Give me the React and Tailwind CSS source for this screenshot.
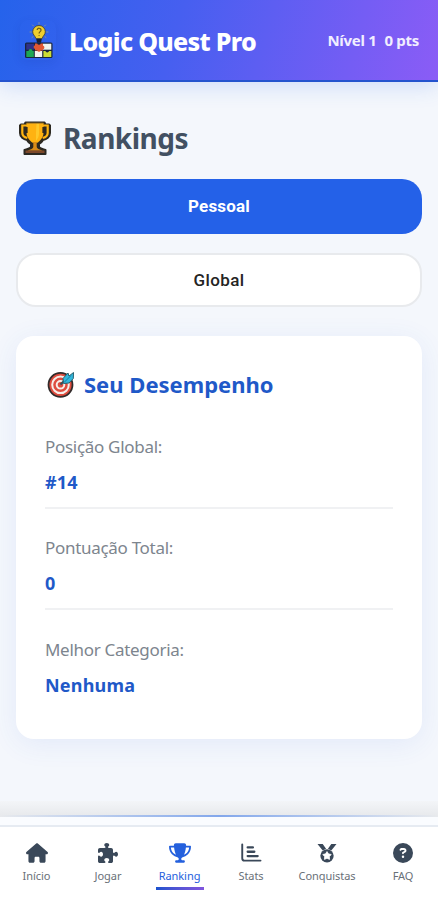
import { FaHouse, FaPuzzlePiece, FaTrophy, FaCircleQuestion } from 'react-icons/fa6';

const stats = [
  { label: 'Posição Global:', value: '#14' },
  { label: 'Pontuação Total:', value: '0' },
  { label: 'Melhor Categoria:', value: 'Nenhuma' },
];

const StatsIcon = ({ className }) => (
  <svg viewBox="0 0 22 21" className={className} fill="none" stroke="currentColor" strokeLinecap="round">
    <path d="M1.800 1.500V16c0 1.500.8 2.500 2.300 2.500H21" strokeWidth="2" />
    <path d="M7.500 4.700H13M7.500 9.200h7M7.500 13.700H18" strokeWidth="2.400" />
  </svg>
);

const MedalIcon = ({ className }) => (
  <svg viewBox="0 0 22 21" className={className} fill="currentColor">
    <path d="M1 1h5.500L10 6 6.500 8zM21 1h-5.500L12 6l3.500 2z" />
    <circle cx="11" cy="13.500" r="7" />
    <path d="m11 9 1.500 2.400 2.900.7-1.900 2.200.2 2.900-2.700-1.100-2.700 1.100.2-2.900-1.900-2.200 2.900-.7z" fill="#fff" stroke="#fff" strokeWidth="0.800" strokeLinejoin="round" />
  </svg>
);

const tabs = [
  { label: 'Início', icon: FaHouse, width: 'w-[73px]' },
  { label: 'Jogar', icon: FaPuzzlePiece, width: 'w-[70px]' },
  { label: 'Ranking', icon: FaTrophy, width: 'w-[73px]', active: true },
  { label: 'Stats', icon: StatsIcon, width: 'w-[70px]' },
  { label: 'Conquistas', icon: MedalIcon, width: 'w-[82px]' },
  { label: 'FAQ', icon: FaCircleQuestion, width: 'w-[70px]' },
];

const Logo = () => (
  <svg viewBox="0 0 36 40" className="h-10 w-9 shrink-0">
    <g stroke="#d8c84a" strokeWidth="0.7" strokeLinecap="round" opacity="0.7">
      <path d="M19 2.500V4M12.500 5l1 1M25.500 5l-1 1M10 12h1.300M26.700 12H28M12 17.500l1-.8M26 17.500l-1-.8" />
    </g>
    <path d="M19 5.500a6.300 6.300 0 0 0-6.300 6.200c0 3 2.300 4 3.300 7h6c1-3 3.300-4 3.300-7A6.300 6.300 0 0 0 19 5.500z" fill="#f0cf2e" stroke="#4a4730" strokeWidth="0.9" />
    <path d="M17.200 10c0-2.500 4-2.300 3.800.2-.1 1.500-1.900 1.400-1.900 3.200M19.100 15.200v.9" fill="none" stroke="#6d5a18" strokeWidth="1.200" />
    <path d="M16.200 18.800h5.600l-.8 4h-4z" fill="#172137" />
    <rect x="5" y="22.500" width="27.500" height="15.500" rx="1.500" fill="#17243d" />
    <path d="M6.300 23.700h8v6h-8z" fill="#303187" />
    <path d="M23 23.700h8.300v6H23z" fill="#eef3ed" />
    <path d="M6.300 31h2.200a2 2 0 0 1 4 0h1.300v6H6.300z" fill="#1da653" />
    <path d="M14.800 31h7.400v6h-7.400z" fill="#f3f4ee" />
    <path d="M23.400 31h2a1.900 1.900 0 0 0 3.700 0h2.200v6h-7.900z" fill="#cbdc35" />
    <path d="M15 23.500h2.200a1.900 1.900 0 0 0 3.600 0H23v2a2 2 0 0 1 0 3.800v1.200h-2.200a1.900 1.900 0 0 1-3.600 0H15v-1.500a2 2 0 0 1 0-3.800z" fill="#e25832" />
  </svg>
);

const TrophyIcon = () => (
  <svg viewBox="0 0 32 36" className="h-9 w-8 shrink-0">
    <path d="M6.500 2.500h19l1 2H30l1 1V13c0 4-3.500 6.500-7 7-1 2-2.500 3-4 4v2.500c0 1.500 3 2.500 6.500 3.500V34h-21v-4c3.500-1 6.500-2 6.500-3.500V24c-1.500-1-3-2-4-4-3.500-.5-7-3-7-7V5.500l1-1h3.500z" fill="#2c2922" stroke="#2c2922" strokeWidth="2" strokeLinejoin="round" />
    <path d="M8 5.500H3.300V13c0 2.500 2 4.300 5 5M24 5.500h4.700V13c0 2.500-2 4.300-5 5" fill="none" stroke="#ffb411" strokeWidth="2.200" />
    <path d="M7.500 3h17v9.500c0 5-3.500 8.500-6 10.200h-5c-2.500-1.700-6-5.200-6-10.200z" fill="#ffb211" />
    <path d="M14.300 22h3.400v5c0 1.500 2.500 2.500 6 3.700H8.300c3.500-1.200 6-2.200 6-3.700z" fill="#d98b18" />
    <path d="M17.500 3.500H20v10c0 3.500-1.500 5-3 7.500v-8z" fill="#ffc829" />
    <path d="M7.500 3.200h17" stroke="#a57a25" strokeWidth="1" />
    <path d="M7.500 7v6M24.500 7v6" stroke="#30291e" strokeWidth="2.200" />
    <path d="M6.500 30.500h19V33h-19z" fill="#7c482b" />
  </svg>
);

const TargetIcon = () => (
  <svg viewBox="0 0 30 30" className="h-[30px] w-[30px] shrink-0">
    <circle cx="15.500" cy="15.800" r="12" fill="#df4c3e" stroke="#312b2b" strokeWidth="1.800" />
    <circle cx="15.500" cy="15.800" r="8.300" fill="none" stroke="#f6efea" strokeWidth="2" />
    <circle cx="15.500" cy="15.800" r="3.800" fill="#dc4d3f" stroke="#f6efea" strokeWidth="2" />
    <path d="m15.500 15.500 7-7" stroke="#31515b" strokeWidth="2" />
    <path d="m18 9.500 5-5.500 1 3 4.500-3.500-.2 6-4.300 4.500-5.500.5z" fill="#32b7dc" stroke="#286271" strokeWidth="1" strokeLinejoin="round" />
    <path d="m19 13.500 7-7" stroke="#167da2" strokeWidth="1" />
  </svg>
);

const NavItem = ({ tab }) => {
  const Icon = tab.icon;

  return (
    <button className={`flex flex-col items-center pt-4 ${tab.width} ${tab.active ? 'text-[#2460dd]' : 'text-[#3a4859]'}`}>
      <Icon className="h-5 w-[22px]" />
      <span className={`mt-1 text-[11px] leading-[18px] tracking-[-0.05px] ${tab.active ? '' : 'text-[#697078]'}`}>{tab.label}</span>
      {tab.active && <span className="mt-0.5 h-[3px] w-12 bg-gradient-to-r from-[#1952ce] to-[#8055dd]" />}
    </button>
  );
};

const App = () => (
  <div className="flex h-[900px] w-full flex-col overflow-hidden bg-[#f4f7fc] font-['Noto_Sans',sans-serif]">
    <header className="z-10 flex h-[82px] shrink-0 items-center justify-between border-b-2 border-[#2453ce] bg-[linear-gradient(105deg,#2563eb_0%,#465ff0_40%,#8b5cf6_100%)] pr-[19px] pl-5 text-white shadow-[0_3px_22px_rgba(37,99,235,0.2)]">
      <div className="flex items-center gap-[13px]">
        <div className="rounded-lg shadow-[0_3px_8px_rgba(20,60,160,0.14)]">
          <Logo />
        </div>
        <h1 className="pt-px text-[25px] leading-8 font-extrabold tracking-[-0.7px] whitespace-nowrap">Logic Quest Pro</h1>
      </div>
      <div className="flex gap-2 text-[15px] leading-5 font-bold tracking-[-0.3px] whitespace-nowrap text-[#f1eeff]">
        <span>Nível 1</span>
        <span>0 pts</span>
      </div>
    </header>

    <main className="flex min-h-0 flex-1 flex-col px-4 pt-[38px]">
      <div className="flex h-9 items-center gap-[12px] pl-[3px]">
        <TrophyIcon />
        <h2 className="text-[28px] leading-9 font-bold tracking-[-0.5px] text-[#425062]">Rankings</h2>
      </div>

      <div className="mt-[23px] flex flex-col gap-[19px] font-[Roboto,sans-serif] text-[17px] tracking-[0.2px]">
        <button className="h-[55px] rounded-[20px] bg-[#2461e8] font-bold text-white">Pessoal</button>
        <button className="h-[54px] rounded-[20px] border-2 border-[#e8eaed] bg-white pt-0.5 font-medium tracking-[0.4px] text-[#242424]">Global</button>
      </div>

      <section className="mt-[29px] h-[403px] shrink-0 rounded-[18px] bg-white px-[29px] pt-[33px] shadow-[0_5px_28px_rgba(60,100,220,0.09)]">
        <div className="flex h-[30px] items-center gap-[9px]">
          <TargetIcon />
          <h3 className="text-[22px] leading-[30px] font-bold text-[#1f59c8]">Seu Desempenho</h3>
        </div>
        <div className="mt-2">
          {stats.map((stat, i) => (
            <div key={stat.label} className={`h-[101.500px] pt-[27.5px] ${i < stats.length - 1 ? 'border-b-2 border-[#f0f1f3]' : ''}`}>
              <p className="text-[17px] leading-6 tracking-[-0.3px] text-[#7d858e]">{stat.label}</p>
              <p className="mt-[11px] text-[18px] leading-6 font-bold tracking-[0.2px] text-[#1f59c8]">{stat.value}</p>
            </div>
          ))}
        </div>
      </section>
    </main>

    <div className="h-[14px] shrink-0 bg-gradient-to-b from-[#f3f5f8] to-[#e8eaed]" />
    <div className="h-[2px] shrink-0 bg-gradient-to-r from-[#e8eaed] via-[#83a7eb] to-[#e8eaed]" />
    <div className="h-[8px] shrink-0 bg-[#fafcff]" />
    <nav className="flex h-[75px] shrink-0 border-t-2 border-[#e6ebf2] bg-white">
      {tabs.map((tab) => (
        <NavItem key={tab.label} tab={tab} />
      ))}
    </nav>
  </div>
);

export default App;
